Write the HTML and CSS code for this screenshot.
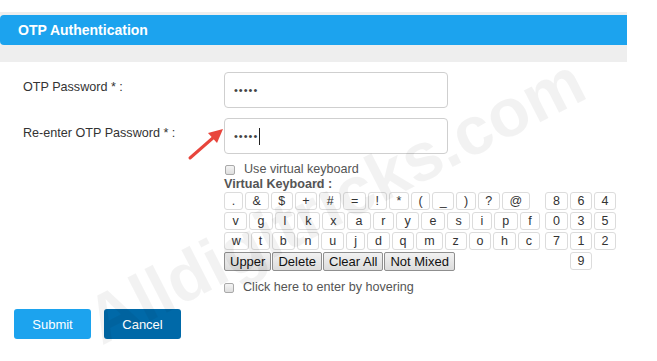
FILE: index.html
```html
<!DOCTYPE html>
<html>
<head>
<meta charset="utf-8">
<link rel="stylesheet" href="styles.css">
</head>
<body>
<div class="page">
  <div class="panel">
    <div class="panel-head">OTP Authentication</div>
  </div>
  <div class="content">
    <div class="form-grid">
      <label class="lbl">OTP Password * :</label>
      <div class="field"><input class="inp" type="password" value="12345"></div>
      <label class="lbl">Re-enter OTP Password * :</label>
      <div class="field"><input class="inp" type="password" value="12345"><span class="caret"></span></div>
      <div></div>
      <div class="vk-area">
        <div class="check-row first"><span class="cb"></span><span>Use virtual keyboard</span></div>
        <div class="vk-title">Virtual Keyboard :</div>
        <div class="vk">
          <div class="vk-left">
            <div class="krow"><span class="key">.</span><span class="key">&amp;</span><span class="key">$</span><span class="key">+</span><span class="key">#</span><span class="key">=</span><span class="key">!</span><span class="key">*</span><span class="key">(</span><span class="key">_</span><span class="key">)</span><span class="key">?</span><span class="key">@</span></div>
            <div class="krow fill"><span class="key">v</span><span class="key">g</span><span class="key">l</span><span class="key">k</span><span class="key">x</span><span class="key">a</span><span class="key">r</span><span class="key">y</span><span class="key">e</span><span class="key">s</span><span class="key">i</span><span class="key">p</span><span class="key">f</span></div>
            <div class="krow fill"><span class="key">w</span><span class="key">t</span><span class="key">b</span><span class="key">n</span><span class="key">u</span><span class="key">j</span><span class="key">d</span><span class="key">q</span><span class="key">m</span><span class="key">z</span><span class="key">o</span><span class="key">h</span><span class="key">c</span></div>
            <div class="brow"><button class="sbtn">Upper</button><button class="sbtn">Delete</button><button class="sbtn">Clear All</button><button class="sbtn">Not Mixed</button></div>
          </div>
          <div class="numpad">
            <span class="key">8</span><span class="key">6</span><span class="key">4</span>
            <span class="key">0</span><span class="key">3</span><span class="key">5</span>
            <span class="key">7</span><span class="key">1</span><span class="key">2</span>
            <span class="key nine">9</span>
          </div>
        </div>
        <div class="check-row second"><span class="cb"></span><span>Click here to enter by hovering</span></div>
      </div>
    </div>
    <div class="actions">
      <button class="btn submit">Submit</button>
      <button class="btn cancel">Cancel</button>
    </div>
  </div>
  <svg class="arrow" width="50" height="45" viewBox="0 0 50 45">
    <line x1="4" y1="40" x2="28" y2="19" stroke="#e8453c" stroke-width="3" stroke-linecap="round"/>
    <polygon points="37,11 22,15 31,25" fill="#e8453c"/>
  </svg>
  <div class="watermark">Alldigitricks.com</div>
</div>
</body>
</html>
```
FILE: styles.css
```css
* { box-sizing: border-box; }
html, body { margin: 0; padding: 0; background: #fff; }
body { font-family: "Liberation Sans", Arial, sans-serif; color: #333; }
.page { position: relative; width: 657px; height: 361px; overflow: hidden; }

.panel {
  margin-top: 12px;
  width: 627px;
  background: #eeeeee;
  padding: 3px 0 17px 0;
}
.panel-head {
  height: 30px;
  background: #1ca3ee;
  border-radius: 4px 0 0 4px;
  color: #fff;
  font-weight: bold;
  font-size: 14px;
  line-height: 30px;
  padding-left: 18px;
}

.content {
  width: 627px;
  border-radius: 4px 4px 0 0;
  padding-top: 10px;
}
.form-grid {
  display: grid;
  grid-template-columns: 201px 224px;
  row-gap: 10px;
  padding-left: 23px;
}
.lbl {
  font-size: 12.6px;
  line-height: 15px;
  padding-top: 8px;
  color: #333;
}
.field { position: relative; }
.inp {
  display: block;
  width: 224px;
  height: 36px;
  border: 1px solid #cfcfcf;
  border-radius: 4px;
  padding: 0 9px;
  font-family: "Liberation Sans", Arial, sans-serif;
  font-size: 11px;
  letter-spacing: 1px;
  color: #444;
  background: #fff;
  outline: none;
}
.caret {
  position: absolute;
  left: 35px;
  top: 10px;
  width: 1px;
  height: 17px;
  background: #222;
}

.vk-area { margin-top: -2px; }
.check-row {
  display: flex;
  align-items: center;
  font-size: 12.6px;
  line-height: 15px;
  color: #555;
}
.check-row.first { padding-left: 1px; }
.check-row.second { margin-top: 9px; }
.cb {
  width: 10px;
  height: 10px;
  border: 1px solid #a9a9a9;
  border-radius: 2px;
  background: linear-gradient(#f4f4f4, #dedede);
  margin-right: 9px;
}
.vk-title {
  font-size: 12.6px;
  line-height: 15px;
  font-weight: bold;
  color: #555;
}
.vk { display: flex; align-items: flex-start; }
.vk-left { display: flex; flex-direction: column; gap: 2px; width: 316px; flex-shrink: 0; }
.krow { display: flex; gap: 2px; }
.key {
  height: 18px;
  min-width: 19px;
  border: 1px solid #dcdcdc;
  border-radius: 3px;
  background: #fff;
  padding: 0 6.6px;
  font-size: 12.5px;
  line-height: 16px;
  text-align: center;
  color: #333;
}
.krow.fill .key { flex: 1 1 auto; }
.brow { display: flex; gap: 1px; }
.sbtn {
  height: 19px;
  padding: 0 5px;
  font-family: "Liberation Sans", Arial, sans-serif;
  font-size: 13px;
  line-height: 16px;
  color: #111;
  background: linear-gradient(#f2f2f2, #dcdcdc);
  border: 1px solid #8f8f8f;
  border-radius: 2px;
}
.numpad {
  display: grid;
  grid-template-columns: 23px 22px 22px;
  gap: 2px;
  margin-left: 5px;
  flex-shrink: 0;
}
.numpad .key { padding: 0; }
.numpad .nine { grid-column: 2; }

.actions {
  display: flex;
  gap: 13px;
  padding-left: 14px;
  margin-top: 14px;
}
.btn {
  width: 77px;
  height: 30px;
  border: none;
  border-radius: 3px;
  color: #fff;
  font-family: "Liberation Sans", Arial, sans-serif;
  font-size: 13px;
}
.submit { background: #1ca3ee; }
.cancel { background: #0069a8; }

.arrow { position: absolute; left: 186px; top: 118px; }
.watermark {
  position: absolute;
  left: 335px;
  top: 200px;
  transform: translate(-50%, -50%) rotate(-27deg);
  font-size: 68px;
  font-weight: bold;
  color: rgba(0, 0, 0, 0.05);
  white-space: nowrap;
  pointer-events: none;
}
```
